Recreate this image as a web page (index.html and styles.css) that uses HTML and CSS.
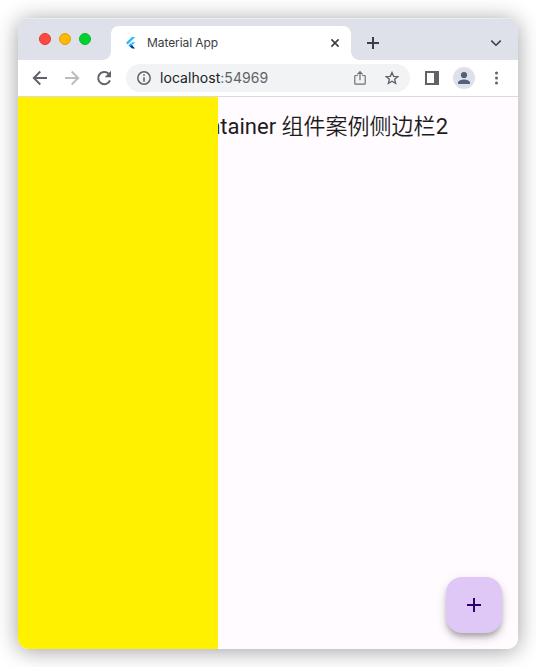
FILE: index.html
```html
<!DOCTYPE html>
<html lang="zh-CN">
<head>
<meta charset="utf-8">
<title>Material App</title>
<link rel="stylesheet" href="styles.css">
</head>
<body>
<div class="window">
  <header class="tabstrip">
    <div class="lights"><i class="light red"></i><i class="light amber"></i><i class="light green"></i></div>
    <div class="tab">
      <svg class="favicon" width="12" height="12" viewBox="0 0 12 12"><path fill="#27b9fa" d="M7 0h3.2L2.6 7.4 1 5.8z"/><path fill="#27b9fa" d="M7 5.3h3.2L7.7 7.8l-1.6-1.6z"/><path fill="#1fa6ee" d="M3.4 8.4 5.6 6.2l2.2 2.2-2 2z"/><path fill="#003a8c" d="m5 9.3 2-1.1 3.2 3.2H7z"/></svg>
      <span class="tab-title">Material App</span>
      <svg class="close" width="10" height="10" viewBox="0 0 10 10"><path d="m1.4 1.4 7.2 7.2m0-7.2L1.4 8.6" stroke="#3c4043" stroke-width="1.6"/></svg>
    </div>
    <svg class="new-tab" width="12" height="12" viewBox="0 0 12 12"><path d="M6 0v12M0 6h12" stroke="#3c4043" stroke-width="2"/></svg>
    <svg class="tab-search" width="12" height="8" viewBox="0 0 12 8"><path d="m1.3 1.6 4.7 4.6 4.7-4.6" fill="none" stroke="#3c4043" stroke-width="1.6"/></svg>
  </header>
  <div class="toolbar">
    <svg class="nav" width="16" height="16" viewBox="0 0 16 16"><path d="M15 8H2.2M8.3 1.5 1.8 8l6.5 6.5" fill="none" stroke="#5f6368" stroke-width="1.9"/></svg>
    <svg class="nav" width="16" height="16" viewBox="0 0 16 16"><path d="M1 8h12.8M7.7 1.5 14.2 8l-6.5 6.5" fill="none" stroke="#babcbe" stroke-width="1.9"/></svg>
    <svg class="nav" width="16" height="16" viewBox="0 0 16 16"><path d="M14 10.3A6.1 6.1 0 1 1 12.6 3.8" fill="none" stroke="#5f6368" stroke-width="2"/><path d="M15 .8v6.4H8.7z" fill="#5f6368"/></svg>
    <div class="omnibox">
      <svg width="14" height="14" viewBox="0 0 14 14"><circle cx="7" cy="7" r="6.2" fill="none" stroke="#5f6368" stroke-width="1.5"/><path d="M7 3.2v1.6M7 6.2v4.6" stroke="#5f6368" stroke-width="1.6"/></svg>
      <span class="url">localhost<span class="port">:54969</span></span>
      <svg class="share" width="12" height="16" viewBox="0 0 12 16"><path d="M3.7 5.5H1.6a.8.8 0 0 0-.8.8v7.1c0 .5.3.8.8.8h8.8c.5 0 .8-.3.8-.8V6.3a.8.8 0 0 0-.8-.8H8.3M6 10.2V1.7M3.4 4.3 6 1.7l2.6 2.6" fill="none" stroke="#6f7276" stroke-width="1.2"/></svg>
      <svg width="14" height="14" viewBox="0 0 14 14"><path d="m7 1.5 1.65 3.8 4.1.35-3.1 2.7.95 4L7 10.2l-3.6 2.15.95-4-3.1-2.7 4.1-.35z" fill="none" stroke="#5f6368" stroke-width="1.35"/></svg>
    </div>
    <svg class="panel" width="14" height="14" viewBox="0 0 14 14"><path fill="#5f6368" fill-rule="evenodd" d="M0 0h14v14H0zM2 2v10h7V2z"/></svg>
    <svg class="avatar" width="22" height="22" viewBox="0 0 22 22"><circle cx="11" cy="11" r="11" fill="#dee1e9"/><circle cx="11" cy="8" r="3.1" fill="#52607a"/><path fill="#52607a" d="M5 17v-1.400C5 13.400 9 12.400 11 12.400s6 1 6 3.200V17z"/></svg>
    <svg class="more" width="4" height="14" viewBox="0 0 4 14"><g fill="#5f6368"><circle cx="2.500" cy="2" r="1.5"/><circle cx="2.500" cy="7" r="1.5"/><circle cx="2.500" cy="12" r="1.5"/></g></svg>
  </div>
  <main class="page">
    <h1 class="app-title">Container <span class="han">组件案例侧边栏</span>2</h1>
    <aside class="drawer"></aside>
    <button class="fab" aria-label="Add"><svg width="14" height="14" viewBox="0 0 14 14"><path d="M7 0v14M0 7h14" stroke="#31006a" stroke-width="2"/></svg></button>
  </main>
</div>
</body>
</html>
```
FILE: styles.css
```css
* { box-sizing: border-box; }
body { margin: 0; padding: 18px; height: 667px; overflow: hidden; background: #fff; font-family: Roboto, "Noto Sans CJK SC", sans-serif; }
svg { display: block; flex: none; }
.window { width: 500px; height: 631px; border-radius: 11px; overflow: hidden; display: flex; flex-direction: column; background: #fff; box-shadow: 0 2px 22px rgba(0,0,0,.38); }
.tabstrip { height: 42px; flex: none; display: flex; background: #dee1e9; box-shadow: inset 0 1px #e9ebef; }
.lights { width: 93px; display: flex; gap: 8px; padding: 15px 0 0 21px; }
.light { width: 12px; height: 12px; border-radius: 50%; border: 1px solid; }
.red { background: #ff4a43; border-color: #e2382f; }
.amber { background: #ffb900; border-color: #dfa010; }
.green { background: #00d12b; border-color: #0db52b; }
.tab { position: relative; width: 240px; height: 34px; margin-top: 8px; padding: 0 11px 0 14px; display: flex; align-items: center; background: #fff; border-radius: 8px 8px 0 0; }
.tab::before, .tab::after { content: ""; position: absolute; bottom: 0; width: 8px; height: 8px; }
.tab::before { left: -8px; background: radial-gradient(circle at 0 0, transparent 7.5px, #fff 8px); }
.tab::after { right: -8px; background: radial-gradient(circle at 100% 0, transparent 7.5px, #fff 8px); }
.tab-title { margin-left: 10px; flex: 1; font: 12px/16px Inter, sans-serif; letter-spacing: -0.08px; color: #3c4043; }
.new-tab { margin: 19px 0 0 16px; }
.tab-search { margin: 21px 16px 0 auto; }
.toolbar { height: 37px; flex: none; display: flex; align-items: center; padding: 0 20px 0 14px; border-bottom: 1px solid #d9dade; background: #fff; }
.nav { margin-right: 16px; }
.omnibox { width: 284px; height: 28px; margin-left: -2px; padding: 0 11px; border-radius: 14px; display: flex; align-items: center; background: #f1f3f4; }
.url { margin-left: 9px; flex: 1; font: 14px/20px Inter, sans-serif; letter-spacing: 0.05px; color: #202124; }
.port { color: #5f6368; }
.share { margin-right: 19px; }
.panel { margin-left: 15px; }
.avatar { margin-left: 14px; }
.more { margin-left: auto; }
.page { position: relative; flex: 1; background: #fffbff; }
.app-title { margin: 0; padding-right: 70px; height: 60px; font-size: 22px; line-height: 60px; font-weight: 400; text-align: right; color: #1d1b1e; white-space: nowrap; }
.han { font-family: "Noto Sans CJK SC DemiLight", "Noto Sans CJK SC", sans-serif; font-weight: 350; line-height: 1; }
.drawer { position: absolute; left: 0; top: 0; bottom: 0; width: 200px; background: #fff100; }
.fab { position: absolute; right: 16px; bottom: 16px; width: 56px; height: 56px; padding: 0; border: 0; border-radius: 16px; display: flex; align-items: center; justify-content: center; background: #dfc8f5; box-shadow: 0 4px 5px -1px rgba(0,0,0,.22), 0 6px 10px rgba(0,0,0,.14), 0 1px 14px rgba(0,0,0,.05); }
```
